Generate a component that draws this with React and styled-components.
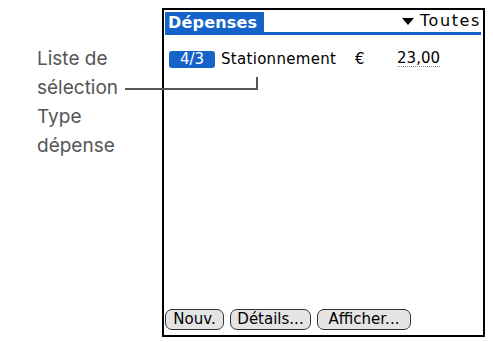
import React from 'react';
import styled, { createGlobalStyle } from 'styled-components';

const Global = createGlobalStyle`
  html, body { margin: 0; padding: 0; background: #fff; }
  body { font-family: "DejaVu Sans", sans-serif; }
`;

const Page = styled.div`
  position: relative;
  width: 493px;
  height: 342px;
  display: flex;
  align-items: flex-start;
`;

const Callout = styled.div`
  width: 125px;
  padding: 44px 0 0 37px;
  box-sizing: border-box;
  font-family: Inter, "Liberation Sans", sans-serif;
  font-size: 19px;
  line-height: 29px;
  color: #555;
  white-space: nowrap;
`;

const Screen = styled.div`
  margin: 8px 0 0 37px;
  width: 323px;
  height: 329px;
  box-sizing: border-box;
  border: 2px solid #000;
  display: flex;
  flex-direction: column;
  padding: 2px 2px 3px 1px;
  font-family: "DejaVu Sans", sans-serif;
`;

const TitleBar = styled.div`
  display: flex;
  align-items: flex-end;
  justify-content: space-between;
  border-bottom: 3px solid #1563c8;
  height: 20px;
`;

const TitleTab = styled.div`
  background: #1563c8;
  color: #fff;
  font-weight: bold;
  font-size: 16px;
  height: 20px;
  line-height: 21px;
  padding: 0 6px 0 3px;
  width: 90px;
  letter-spacing: 0.2px;
`;

const Picker = styled.div`
  display: flex;
  align-items: center;
  gap: 6px;
  font-size: 16px;
  letter-spacing: 1.6px;
  color: #000;
  line-height: 18px;
  margin-bottom: 2px;
`;

const Arrow = styled.span`
  width: 0;
  height: 0;
  border-left: 6px solid transparent;
  border-right: 6px solid transparent;
  border-top: 7px solid #000;
`;

const Row = styled.div`
  display: flex;
  align-items: center;
  margin-top: 16px;
  padding-left: 4px;
  height: 16px;
  font-size: 15px;
  color: #000;
`;

const Badge = styled.span`
  background: #1563c8;
  color: #fff;
  border-radius: 3px;
  width: 46px;
  height: 17px;
  line-height: 17px;
  text-align: center;
  font-size: 15px;
`;

const Label = styled.span`
  margin-left: 6px;
  width: 134px;
  letter-spacing: 0.3px;
`;

const Euro = styled.span`
  width: 42px;
`;

const Amount = styled.span`
  width: 43px;
  text-align: right;
  border-bottom: 1px dotted #888;
  line-height: 15px;
`;

const Spacer = styled.div`
  flex: 1;
`;

const Buttons = styled.div`
  display: flex;
  gap: 6px;
  margin-bottom: 2px;
`;

const Btn = styled.button`
  font-family: "DejaVu Sans", sans-serif;
  font-size: 15px;
  color: #000;
  background: #e4e4e4;
  border: 1.5px solid #333;
  border-radius: 7px;
  height: 21px;
  padding: 0;
  width: ${p => p.w}px;
  line-height: 17px;
  white-space: nowrap;
`;

const Connector = styled.svg`
  position: absolute;
  left: 0;
  top: 0;
  pointer-events: none;
`;

export default function App() {
  return (
    <>
      <Global />
      <Page>
        <Callout>
          Liste de<br />sélection<br />Type<br />dépense
        </Callout>
        <Screen>
          <TitleBar>
            <TitleTab>Dépenses</TitleTab>
            <Picker><Arrow />Toutes</Picker>
          </TitleBar>
          <Row>
            <Badge>4/3</Badge>
            <Label>Stationnement</Label>
            <Euro>€</Euro>
            <Amount>23,00</Amount>
          </Row>
          <Spacer />
          <Buttons>
            <Btn w={59}>Nouv.</Btn>
            <Btn w={81}>Détails...</Btn>
            <Btn w={94}>Afficher...</Btn>
          </Buttons>
        </Screen>
        <Connector width="493" height="342">
          <polyline points="125,89 257,89 257,77" fill="none" stroke="#555" strokeWidth="2" />
        </Connector>
      </Page>
    </>
  );
}
